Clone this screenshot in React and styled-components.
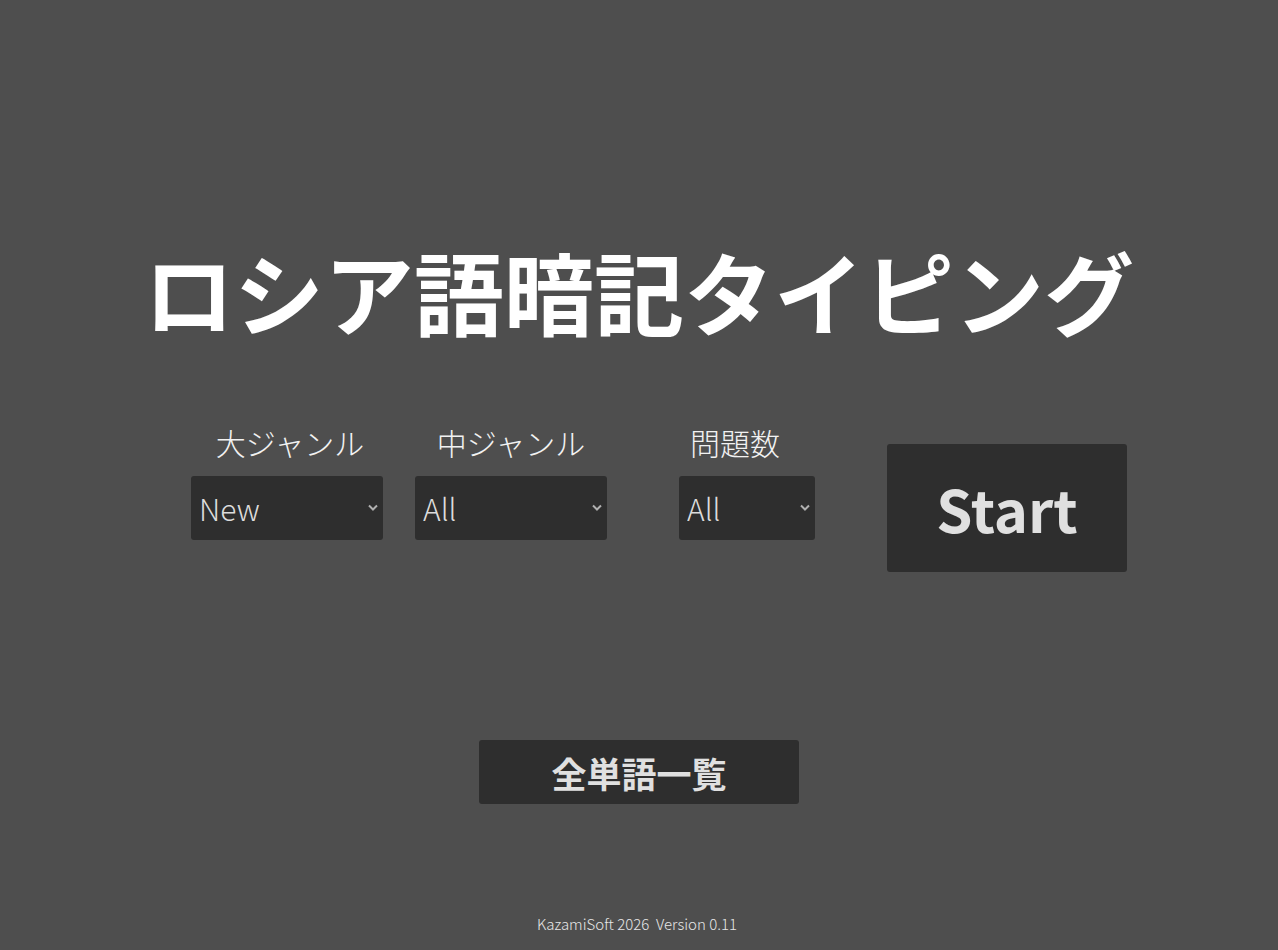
import React, { useState } from "react";
import styled, { createGlobalStyle } from "styled-components";

const GlobalStyle = createGlobalStyle`
  html, body {
    margin: 0;
    padding: 0;
    background: #4e4e4e;
    font-family: "Noto Sans CJK JP", "Noto Sans", sans-serif;
    color: #ffffff;
  }
`;

const lightFont = `"Noto Sans CJK JP Light", "Noto Sans CJK JP DemiLight", "Noto Sans CJK JP", sans-serif`;

const Page = styled.div`
  width: 100%;
  height: 950px;
  display: flex;
  flex-direction: column;
  align-items: center;
  box-sizing: border-box;
  padding-top: 236px;
`;

const Title = styled.h1`
  margin: 0;
  font-size: 90px;
  font-weight: 700;
  line-height: 1.2;
  color: #ffffff;
`;

const Controls = styled.div`
  display: flex;
  align-items: flex-start;
  margin-top: 76px;
  margin-left: 40px;
`;

const Field = styled.div`
  display: flex;
  flex-direction: column;
  align-items: center;
  margin-right: ${(p) => p.$gap}px;
`;

const Label = styled.label`
  font-family: ${lightFont};
  font-size: 30px;
  font-weight: 300;
  line-height: 44px;
  color: #f2f2f2;
  margin-bottom: 12px;
  transform: translateX(${(p) => p.$shift || 0}px);
`;

const SelectWrap = styled.div`
  position: relative;
  width: ${(p) => p.$width}px;
  height: 64px;
`;

const Select = styled.select`
  appearance: none;
  -webkit-appearance: none;
  width: 100%;
  height: 100%;
  box-sizing: border-box;
  border: none;
  border-radius: 3px;
  background: #2e2e2e;
  color: #dcdcdc;
  font-family: ${lightFont};
  font-size: 30px;
  font-weight: 300;
  padding: 0 24px 0 8px;
  outline: none;
`;

const Chevron = styled.svg`
  position: absolute;
  right: 5px;
  top: 28px;
  width: 10px;
  height: 7px;
  pointer-events: none;
`;

const StartButton = styled.button`
  width: 240px;
  height: 128px;
  margin-top: 24px;
  border: none;
  border-radius: 3px;
  background: #2e2e2e;
  color: #e0e0e0;
  font-family: inherit;
  font-size: 58px;
  font-weight: 700;
  cursor: pointer;
`;

const ListButton = styled.button`
  width: 320px;
  height: 64px;
  margin-top: 168px;
  border: none;
  border-radius: 3px;
  background: #2e2e2e;
  color: #e0e0e0;
  font-family: inherit;
  font-size: 35px;
  font-weight: 700;
  cursor: pointer;
`;

const Footer = styled.footer`
  margin-top: auto;
  margin-right: 4px;
  padding-bottom: 16px;
  font-family: ${lightFont};
  font-size: 15px;
  font-weight: 300;
  color: #e6e6e6;
  white-space: pre;
`;

const majorGenres = ["New", "All"];
const minorGenres = ["All"];
const counts = ["All", "10", "20", "50"];

const Dropdown = ({ width, value, options, onChange }) => (
  <SelectWrap $width={width}>
    <Select value={value} onChange={(e) => onChange(e.target.value)}>
      {options.map((o) => (
        <option key={o}>{o}</option>
      ))}
    </Select>
    <Chevron viewBox="0 0 10 7">
      <path d="M1 1.5 L5 5.5 L9 1.5" fill="none" stroke="#b0b0b0" strokeWidth="2" />
    </Chevron>
  </SelectWrap>
);

const App = () => {
  const [major, setMajor] = useState("New");
  const [minor, setMinor] = useState("All");
  const [count, setCount] = useState("All");

  return (
    <>
      <GlobalStyle />
      <Page>
        <Title>ロシア語暗記タイピング</Title>
        <Controls>
          <Field $gap={32}>
            <Label $shift={3}>大ジャンル</Label>
            <Dropdown width={192} value={major} options={majorGenres} onChange={setMajor} />
          </Field>
          <Field $gap={72}>
            <Label>中ジャンル</Label>
            <Dropdown width={192} value={minor} options={minorGenres} onChange={setMinor} />
          </Field>
          <Field $gap={72}>
            <Label $shift={-12}>問題数</Label>
            <Dropdown width={136} value={count} options={counts} onChange={setCount} />
          </Field>
          <StartButton>Start</StartButton>
        </Controls>
        <ListButton>全単語一覧</ListButton>
        <Footer>{"KazamiSoft 2026  Version 0.11"}</Footer>
      </Page>
    </>
  );
};

export default App;
